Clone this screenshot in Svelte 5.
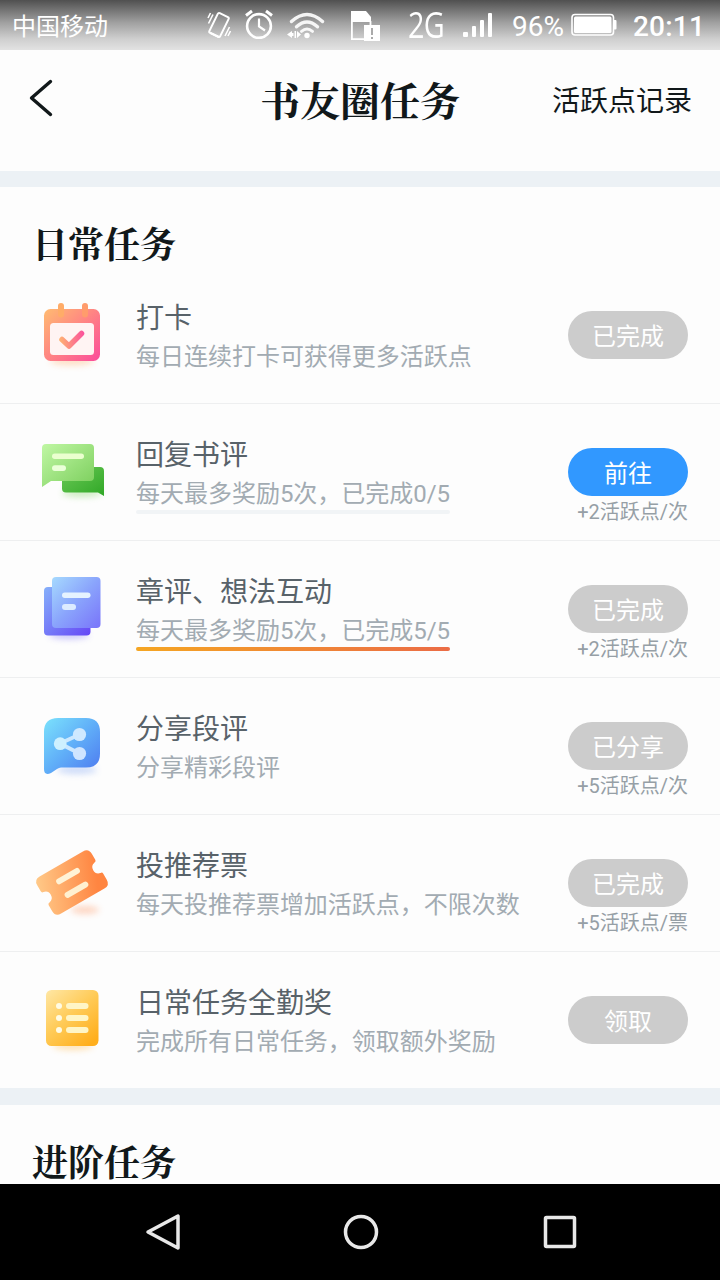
<script>
  const tasks = [
    { icon: 'checkin', title: '打卡', desc: '每日连续打卡可获得更多活跃点', button: '已完成' },
    { icon: 'reply', title: '回复书评', desc: '每天最多奖励5次，已完成0/5', button: '前往', active: true, note: '+2活跃点/次', progress: 0 },
    { icon: 'chapter', title: '章评、想法互动', desc: '每天最多奖励5次，已完成5/5', button: '已完成', note: '+2活跃点/次', progress: 100 },
    { icon: 'share', title: '分享段评', desc: '分享精彩段评', button: '已分享', note: '+5活跃点/次' },
    { icon: 'ticket', title: '投推荐票', desc: '每天投推荐票增加活跃点，不限次数', button: '已完成', note: '+5活跃点/票' },
    { icon: 'list', title: '日常任务全勤奖', desc: '完成所有日常任务，领取额外奖励', button: '领取' }
  ];
</script>

<div class="screen">
  <div class="status">
    <span class="carrier">中国移动</span>
    <svg class="vibrate" width="26" height="30" viewBox="0 0 26 30" fill="none" stroke="#fff">
      <rect x="7" y="4" width="12" height="22" rx="1.500" stroke-width="2" transform="rotate(26 13 15)" />
      <path d="M4.500 23l8.500 4" stroke-width="2" />
      <path d="M2.500 13.500l4.500-9M2 8l2.500-5M19 26l4.500-9M22 26l2.500-5" stroke-width="1.600" />
    </svg>
    <svg class="alarm" width="30" height="30" viewBox="0 0 30 30" fill="none" stroke="#fff">
      <circle cx="15" cy="17" r="11.900" stroke-width="2.600" />
      <path d="M15 9.500v8l6 4" stroke-width="2.200" />
      <path d="M2 6.500l6-4.500M28 6.500l-6-4.500" stroke-width="3" />
    </svg>
    <svg class="wifi" width="40" height="30" viewBox="0 0 40 30" fill="none" stroke="#fff">
      <path d="M5.500 12.500q15.500-14 31 0" stroke-width="3.400" stroke-linecap="round" opacity=".9" />
      <path d="M10.500 17.800q10.500-9.500 21 0" stroke-width="3.400" stroke-linecap="round" opacity=".9" />
      <path d="M15.500 22.300q5.500-4.500 11 0" stroke-width="3" stroke-linecap="round" opacity=".9" />
      <circle cx="21" cy="26.500" r="2.700" fill="#fff" stroke="none" />
      <path d="M1 25.500l5-3.500v2h1.500v3H6v2zM15 25.500l-4-3.500v7z" fill="#fff" stroke="none" />
      <path d="M9.300 22v7" stroke-width="1.500" />
    </svg>
    <svg class="sim" width="30" height="32" viewBox="0 0 30 32">
      <path d="M1 2h15l5 6v5H1z" fill="#fff" />
      <path d="M1.900 12v18.100H15M20.500 12v4" fill="none" stroke="#fff" stroke-width="1.800" />
      <path d="M14 16h16v16H14z" fill="#fff" />
      <path d="M22 19v7M22 28v2" stroke="#aaa" stroke-width="2" />
    </svg>
    <span class="network">2G</span>
    <svg class="signal" width="30" height="26" viewBox="0 0 30 26" fill="#fff">
      <rect x="0" y="20" width="5" height="5" rx="1" />
      <rect x="9" y="14" width="4" height="11" rx="1" />
      <rect x="17" y="8" width="4" height="17" rx="1" />
      <rect x="25" y="1" width="4" height="24" rx="1" />
    </svg>
    <span class="percent">96%</span>
    <svg class="battery" width="46" height="24" viewBox="0 0 46 24">
      <rect x="1" y="1.500" width="41.500" height="20.500" rx="3" fill="none" stroke="#fff" stroke-width="1.600" />
      <rect x="3" y="3.500" width="37.500" height="16.500" rx="1.500" fill="#fff" />
      <path d="M43 7h1.500q1 0 1 1v7.500q0 1-1 1H43z" fill="#fff" />
    </svg>
    <span class="time">20:11</span>
  </div>

  <header>
    <svg class="back" width="26" height="40" viewBox="0 0 26 40">
      <path d="M22.500 2.500L3.500 19l19 16.500" fill="none" stroke="#11181a" stroke-width="3.400" stroke-linecap="round" stroke-linejoin="round" />
    </svg>
    <h1>书友圈任务</h1>
    <span class="record">活跃点记录</span>
  </header>

  <section class="daily">
    <h2>日常任务</h2>
    {#each tasks as task}
      <div class="task">
        <div class="icon">
          {#if task.icon === 'checkin'}
            <svg viewBox="0 0 90 90">
              <defs>
                <linearGradient id="cal" x1="14" y1="15" x2="70" y2="71" gradientUnits="userSpaceOnUse">
                  <stop offset="0" stop-color="#ffc06f" />
                  <stop offset=".5" stop-color="#ff8583" />
                  <stop offset="1" stop-color="#fb4a9b" />
                </linearGradient>
                <linearGradient id="tick" x1="28" y1="50" x2="54" y2="48" gradientUnits="userSpaceOnUse">
                  <stop offset="0" stop-color="#ffb870" />
                  <stop offset="1" stop-color="#fb529b" />
                </linearGradient>
              </defs>
              <ellipse class="shadow" cx="42" cy="71" rx="22" ry="4.500" fill="#ffb070" />
              <rect x="14" y="19" width="56" height="52" rx="6.500" fill="url(#cal)" />
              <rect x="20" y="33" width="44" height="32" rx="3.500" fill="#fff4f3" />
              <rect x="28" y="13" width="6" height="14.500" rx="3" fill="#ffac68" />
              <rect x="52" y="13" width="6" height="14.500" rx="3" fill="#ff9c6c" />
              <path d="M32 49.500l7 6.500 12.500-12.500" fill="none" stroke="url(#tick)" stroke-width="5.500" stroke-linecap="round" stroke-linejoin="round" />
            </svg>
          {:else if task.icon === 'reply'}
            <svg viewBox="0 -3 90 90">
              <defs>
                <linearGradient id="bubble" x1="0" y1="0" x2="1" y2="1">
                  <stop offset="0" stop-color="#c0f7a4" />
                  <stop offset="1" stop-color="#7bce5c" />
                </linearGradient>
                <linearGradient id="bubbleBack" x1="0" y1="0" x2="1" y2="1">
                  <stop offset="0" stop-color="#6cc957" />
                  <stop offset="1" stop-color="#2fa726" />
                </linearGradient>
              </defs>
              <ellipse class="shadow" cx="52" cy="63" rx="20" ry="4" fill="#7fd060" />
              <path d="M36 37h34q4 0 4 4v25l-6-3.500H36q-4 0-4-4V41q0-4 4-4z" fill="url(#bubbleBack)" />
              <path d="M16 14h44q4 0 4 4v29q0 4-4 4H21l-9 6V18q0-4 4-4z" fill="url(#bubble)" />
              <rect x="22" y="23.500" width="32" height="5.500" rx="2.750" fill="#eaffcf" />
              <rect x="22" y="35.200" width="14" height="5.800" rx="2.900" fill="#eaffd8" />
            </svg>
          {:else if task.icon === 'chapter'}
            <svg viewBox="0 4 90 90">
              <defs>
                <linearGradient id="page" x1="0" y1="0" x2="1" y2="1">
                  <stop offset="0" stop-color="#a6dafe" />
                  <stop offset=".5" stop-color="#8aa4fc" />
                  <stop offset="1" stop-color="#7974fa" />
                </linearGradient>
                <linearGradient id="pageBack" x1="0" y1="0" x2="1" y2="1">
                  <stop offset="0" stop-color="#86b0fa" />
                  <stop offset="1" stop-color="#6546f6" />
                </linearGradient>
              </defs>
              <ellipse class="shadow" cx="39" cy="75" rx="20" ry="4" fill="#7b70f4" />
              <rect x="14" y="27" width="46.500" height="48.500" rx="4" fill="url(#pageBack)" />
              <rect x="22" y="17" width="48.500" height="51" rx="4" fill="url(#page)" />
              <rect x="32" y="32.500" width="28.500" height="5.500" rx="2.750" fill="#e6f3ff" />
              <rect x="32" y="44" width="14" height="6" rx="3" fill="#dcebff" />
            </svg>
          {:else if task.icon === 'share'}
            <svg viewBox="0 1 90 90">
              <defs>
                <linearGradient id="share" x1="0" y1="0" x2="1" y2="1">
                  <stop offset="0" stop-color="#7be2fc" />
                  <stop offset=".5" stop-color="#60aef8" />
                  <stop offset="1" stop-color="#4d78ef" />
                </linearGradient>
              </defs>
              <ellipse class="shadow" cx="47" cy="70" rx="20" ry="4" fill="#82a6f2" />
              <path d="M28 18h28q14 0 14 14v21.500q0 14-14 14H31q-2 0-4 1.500l-6 4q-7 3-7-4V32q0-14 14-14z" fill="url(#share)" />
              <path d="M49.500 34.500L30 43.500l19.500 10" fill="none" stroke="#cbe8ff" stroke-width="4" />
              <circle cx="30.200" cy="43.700" r="6.400" fill="#cdf0ff" />
              <circle cx="49.500" cy="34.500" r="6.600" fill="#cfe9ff" />
              <circle cx="49.500" cy="53.500" r="6.600" fill="#cfe5ff" />
            </svg>
          {:else if task.icon === 'ticket'}
            <svg viewBox="0 -2 90 90">
              <defs>
                <linearGradient id="ticket" x1="0" y1="0" x2="1" y2=".3">
                  <stop offset="0" stop-color="#ffcb8a" />
                  <stop offset="1" stop-color="#ff8541" />
                </linearGradient>
              </defs>
              <ellipse class="shadow" cx="55" cy="70" rx="14" ry="4" fill="#ff9a68" />
              <g transform="rotate(-30 42 42.500)">
                <path d="M17 21h50q6.500 0 6.500 6.500v7q0 2-2 2a6.100 6.100 0 0 0 0 12q2 0 2 2v7q0 6.500-6.500 6.500H17q-6.500 0-6.500-6.500v-7q0-2 2-2a6.100 6.100 0 0 0 0-12q-2 0-2-2v-7Q10.500 21 17 21z" fill="url(#ticket)" />
                <rect x="28.500" y="32" width="26.500" height="6" rx="3" fill="#fff3d6" />
                <rect x="29" y="48" width="26.500" height="6" rx="3" fill="#fff0d0" />
              </g>
            </svg>
          {:else}
            <svg viewBox="0 0 90 90">
              <defs>
                <linearGradient id="list" x1="0" y1="0" x2=".8" y2="1">
                  <stop offset="0" stop-color="#ffe7a5" />
                  <stop offset=".5" stop-color="#ffcb58" />
                  <stop offset="1" stop-color="#ffae1c" />
                </linearGradient>
              </defs>
              <ellipse class="shadow" cx="43" cy="71" rx="20" ry="4" fill="#ffb84a" />
              <rect x="16" y="15" width="52.500" height="56" rx="5.500" fill="url(#list)" />
              {#each [31, 43, 55] as y}
                <circle cx="29" cy={y} r="3" fill="#fffbe4" />
                <rect x="36" y={y - 3} width="22.500" height="6" rx="3" fill="#fff5c6" />
              {/each}
            </svg>
          {/if}
        </div>
        <div class="info">
          <h3>{task.title}</h3>
          <div class="desc">
            <p>{task.desc}</p>
            {#if task.progress !== undefined}
              <div class="track"><div class="bar" style="width: {task.progress}%"></div></div>
            {/if}
          </div>
        </div>
        <div class="action">
          <button class:active={task.active}>{task.button}</button>
          {#if task.note}
            <span>{task.note}</span>
          {/if}
        </div>
      </div>
    {/each}
  </section>

  <section class="advanced">
    <h2>进阶任务</h2>
  </section>

  <nav>
    <svg width="40" height="40" viewBox="0 0 40 40">
      <path d="M34 4v32L4 20z" />
    </svg>
    <svg width="40" height="40" viewBox="0 0 40 40">
      <circle cx="19" cy="20" r="15.500" />
    </svg>
    <svg width="40" height="40" viewBox="0 0 40 40">
      <rect x="5.500" y="5.500" width="29" height="29" rx="1" />
    </svg>
  </nav>
</div>

<style>
  :global(body) {
    background: #fdfdfd;
  }
  .screen {
    display: flex;
    flex-direction: column;
    width: 720px;
    height: 1280px;
    overflow: hidden;
    background: #fdfdfd;
    font-family: Roboto, "Noto Sans CJK SC", sans-serif;
  }
  svg {
    display: block;
    flex: none;
  }
  h1, h2, h3, p {
    margin: 0;
    white-space: nowrap;
  }
  h1, h2 {
    color: #11181a;
    font-family: "Noto Serif CJK SC", "Source Han Serif SC", "Noto Sans CJK SC", serif;
    font-weight: 700;
  }
  .status {
    display: flex;
    align-items: center;
    flex: none;
    height: 50px;
    padding-left: 12px;
    box-sizing: border-box;
    background: linear-gradient(#505050, #a0a0a0 45%, #cfcfcf 78%, #e2e2e2);
    color: #fff;
    white-space: nowrap;
  }
  .carrier {
    width: 194px;
    padding-bottom: 2px;
    font-size: 24px;
  }
  .vibrate {
    width: 26px;
  }
  .alarm {
    margin: 0 0 2px 12px;
  }
  .wifi {
    margin: 0 0 2px 12px;
  }
  .sim {
    margin: 0 0 0 24px;
  }
  .network {
    width: 54px;
    margin-left: 28px;
    padding-bottom: 2px;
    font-family: "Open Sans", sans-serif;
    font-size: 36px;
    letter-spacing: -1px;
    transform: scaleX(.8);
    transform-origin: left;
  }
  .signal {
    margin-left: 1px;
  }
  .percent {
    width: 58px;
    margin: 2px 0 0 19px;
    font-size: 28px;
    font-weight: 400;
  }
  .battery {
    margin-left: 1px;
  }
  .time {
    margin: 2px 0 0 16px;
    font-size: 28px;
    font-weight: 500;
    letter-spacing: .2px;
  }
  header {
    display: grid;
    grid-template-columns: 200px 1fr 200px;
    align-items: center;
    flex: none;
    height: 121px;
    padding: 0 28px 23px;
    box-sizing: border-box;
  }
  h1 {
    font-size: 40px;
    line-height: 48px;
    text-align: center;
    padding-bottom: 1px;
  }
  .record {
    color: #11181a;
    font-size: 28px;
    text-align: right;
    padding-bottom: 1px;
  }
  section {
    flex: none;
    border-top: 16px solid #ecf1f5;
  }
  h2 {
    height: 80px;
    padding: 33px 32px 0;
    box-sizing: border-box;
    font-size: 36px;
    line-height: 46px;
  }
  .task {
    display: flex;
    height: 137px;
    padding: 0 32px 0 30px;
    box-sizing: border-box;
    border-bottom: 1px solid #eeeff0;
  }
  .task:last-child {
    height: 136px;
    border-bottom: 0;
  }
  .icon {
    width: 106px;
    padding-top: 23px;
  }
  .icon svg {
    width: 90px;
    height: 90px;
  }
  .shadow {
    opacity: .4;
    filter: blur(3px);
  }
  .info {
    flex: 1;
    padding-top: 32px;
  }
  h3 {
    color: #586269;
    font-size: 28px;
    font-weight: 400;
    line-height: 40px;
  }
  .desc {
    width: fit-content;
  }
  p {
    color: #a2abb2;
    font-size: 24px;
    line-height: 36px;
    letter-spacing: -.02px;
  }
  .track {
    height: 4px;
    margin-top: -2px;
    border-radius: 2px;
    background: #f1f4f6;
  }
  .bar {
    height: 4px;
    border-radius: 2px;
    background: linear-gradient(90deg, #f5a623, #eb6c46);
  }
  .action {
    display: flex;
    flex-direction: column;
    align-items: flex-end;
    padding-top: 44px;
  }
  button {
    width: 120px;
    height: 48px;
    padding: 0 0 2px;
    border: 0;
    border-radius: 24px;
    background: #ccc;
    color: #fff;
    font-family: inherit;
    font-size: 24px;
  }
  button.active {
    background: #3198ff;
  }
  .action span {
    padding-top: 1px;
    color: #969fa6;
    font-size: 20px;
    line-height: 30px;
    white-space: nowrap;
  }
  .advanced {
    flex: 1;
    border-top-width: 17px;
  }
  .advanced h2 {
    height: 79px;
  }
  nav {
    display: flex;
    align-items: center;
    justify-content: space-between;
    flex: none;
    height: 96px;
    padding: 0 140px 0 144px;
    box-sizing: border-box;
    background: #000;
  }
  nav svg {
    fill: none;
    stroke: #e8e8e8;
    stroke-width: 3.500;
    stroke-linejoin: round;
  }
</style>
